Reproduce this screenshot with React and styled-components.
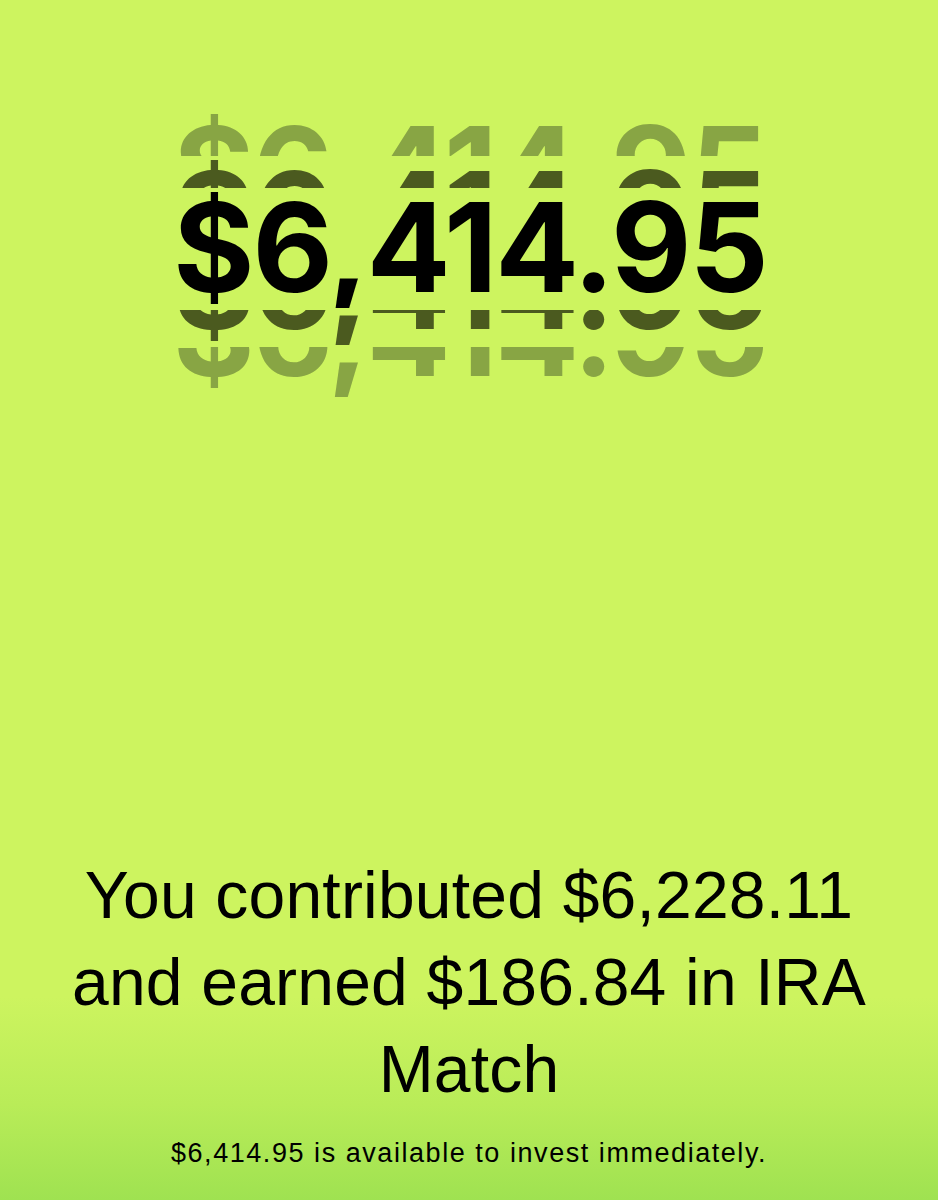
import React from "react";
import styled, { createGlobalStyle } from "styled-components";

const GlobalStyle = createGlobalStyle`
  html, body {
    margin: 0;
    padding: 0;
    height: 100%;
    overflow: hidden;
  }
  body {
    font-family: "Liberation Sans", Arial, Helvetica, sans-serif;
    color: #000;
  }
  #root {
    height: 100%;
  }
`;

const Page = styled.main`
  box-sizing: border-box;
  min-height: 100vh;
  display: flex;
  flex-direction: column;
  align-items: center;
  padding: 112px 0 29px;
  background: linear-gradient(
    to bottom,
    #cdf45f 0%,
    #cdf45f 83%,
    #b9ec58 92%,
    #9fe251 100%
  );
`;

const Roller = styled.div`
  display: flex;
  flex-direction: column;
  align-items: center;
  width: 100%;
`;

const tones = {
  main: "#000000",
  dark: "#4b5a1f",
  light: "#88a544",
};

const Band = styled.div`
  height: ${(p) => p.$height}px;
  margin-top: ${(p) => p.$gap}px;
  overflow: hidden;
  display: flex;
  justify-content: center;
  width: 100%;
`;

const Figure = styled.span`
  display: block;
  margin-top: ${(p) => p.$shift}px;
  font-family: Inter, "Liberation Sans", Arial, sans-serif;
  font-weight: 700;
  font-size: 124px;
  line-height: 124px;
  letter-spacing: -2px;
  white-space: nowrap;
  color: ${(p) => tones[p.$tone]};
  padding-left: 2px;
`;

const Summary = styled.section`
  margin-top: auto;
  display: flex;
  flex-direction: column;
  align-items: center;
  gap: 22px;
  width: 100%;
`;

const Headline = styled.h1`
  margin: 0;
  max-width: 830px;
  text-align: center;
  font-family: "Liberation Sans", Arial, Helvetica, sans-serif;
  font-weight: 400;
  font-size: 66px;
  line-height: 87px;
  letter-spacing: 0.2px;
  color: #000;
`;

const Note = styled.p`
  margin: 0;
  text-align: center;
  font-family: "Liberation Sans", Arial, Helvetica, sans-serif;
  font-weight: 400;
  font-size: 27px;
  line-height: 36px;
  letter-spacing: 1.55px;
  color: #000;
`;

const bands = [
  { tone: "light", height: 44, gap: 0, shift: -3.5 },
  { tone: "dark", height: 28, gap: 4, shift: -6.5 },
  { tone: "main", height: 116, gap: 4, shift: -6.7 },
  { tone: "dark", height: 35, gap: 2, shift: -87.7 },
  { tone: "light", height: 50, gap: 2, shift: -77.7 },
];

export default function App() {
  const amount = "$6,414.95";
  return (
    <>
      <GlobalStyle />
      <Page>
        <Roller aria-label={amount}>
          {bands.map((b, i) => (
            <Band key={i} $height={b.height} $gap={b.gap} aria-hidden={b.tone !== "main"}>
              <Figure $tone={b.tone} $shift={b.shift}>
                {amount}
              </Figure>
            </Band>
          ))}
        </Roller>
        <Summary>
          <Headline>You contributed $6,228.11 and earned $186.84 in IRA Match</Headline>
          <Note>$6,414.95 is available to invest immediately.</Note>
        </Summary>
      </Page>
    </>
  );
}
